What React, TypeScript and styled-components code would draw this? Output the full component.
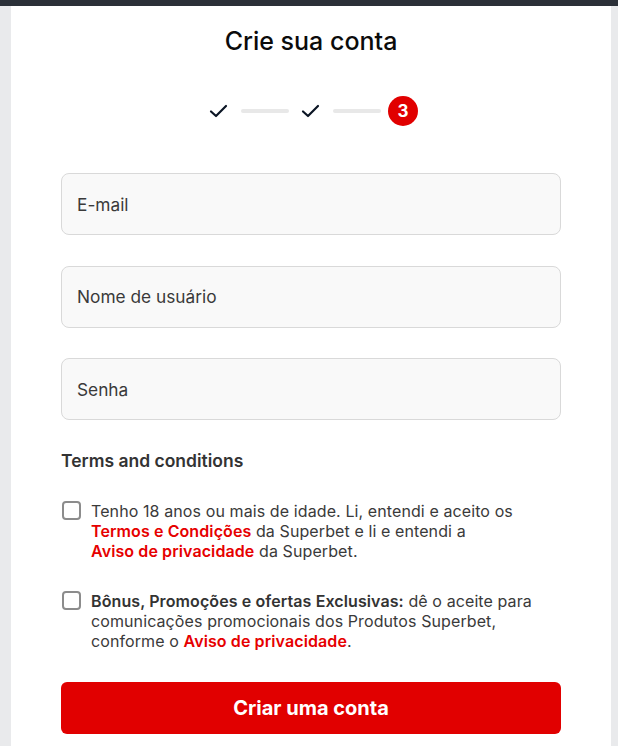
import React from "react";
import styled, { createGlobalStyle } from "styled-components";

const Global = createGlobalStyle`
  html, body { margin: 0; padding: 0; background: #e9eaec; }
  body { font-family: Inter, "Noto Sans", Arial, sans-serif; -webkit-font-smoothing: antialiased; }
  * { box-sizing: border-box; }
`;

const TopBar = styled.div`
  height: 6px;
  background: #2b3038;
`;

const Page = styled.div`
  display: flex;
  padding-left: 11px;
  height: 740px;
  overflow: hidden;
`;

const Panel = styled.main`
  width: 600px;
  background: #ffffff;
  padding: 20px 50px 0;
  display: flex;
  flex-direction: column;
`;

const Title = styled.h1`
  margin: 0;
  font-size: 25px;
  line-height: 30px;
  font-weight: 500;
  color: #0b0b0b;
  text-align: center;
`;

const Stepper = styled.div`
  margin-top: 40px;
  display: flex;
  align-items: center;
  justify-content: center;
  gap: 7px;
  height: 30px;
`;

const StepDone = styled.div`
  width: 30px;
  height: 30px;
  display: flex;
  align-items: center;
  justify-content: center;
`;

const StepLine = styled.div`
  width: 48px;
  height: 4px;
  border-radius: 2px;
  background: #e8e8e8;
`;

const StepCurrent = styled.div`
  width: 30px;
  height: 30px;
  border-radius: 50%;
  background: #e10000;
  color: #fff;
  font-weight: 700;
  font-size: 17px;
  display: flex;
  align-items: center;
  justify-content: center;
`;

const Fields = styled.div`
  margin-top: 47px;
  display: flex;
  flex-direction: column;
  gap: 30.5px;
`;

const Field = styled.div`
  height: 62px;
  border: 1px solid #d9d9d9;
  border-radius: 8px;
  background: #f9f9f9;
  display: flex;
  align-items: center;
  padding: 0 15px;
  font-size: 17.3px;
  color: #3a3a3a;
`;

const SectionTitle = styled.h2`
  margin: 29px 0 0;
  font-size: 17.5px;
  line-height: 24px;
  font-weight: 600;
  color: #333333;
`;

const CheckRow = styled.label<{ $top: number }>`
  margin-top: ${(p) => p.$top}px;
  display: flex;
  align-items: flex-start;
  gap: 10px;
  padding-left: 1px;
`;

const Box = styled.span`
  flex: none;
  width: 19px;
  height: 19px;
  border: 2px solid #8c8c8c;
  border-radius: 4px;
  background: #fff;
`;

const CheckText = styled.p`
  margin: 0;
  font-size: 16px;
  line-height: 20px;
  letter-spacing: 0.1px;
  color: #3a3a3a;
`;

const Link = styled.span`
  color: #e60000;
  font-weight: 600;
`;

const Strong = styled.span`
  font-weight: 600;
  color: #333;
`;

const Button = styled.button`
  margin-top: 31px;
  height: 52px;
  width: 100%;
  border: none;
  border-radius: 6px;
  background: #e10000;
  color: #fff;
  font-family: inherit;
  font-size: 20px;
  font-weight: 700;
  cursor: pointer;
`;

const Check = () => (
  <svg width="20" height="16" viewBox="0 0 20 16" fill="none">
    <path d="M2 8.5 L7 13 L17 3" stroke="#0b1524" strokeWidth="2.2" strokeLinecap="round" strokeLinejoin="round" />
  </svg>
);

export default function App() {
  return (
    <>
      <Global />
      <TopBar />
      <Page>
        <Panel>
          <Title>Crie sua conta</Title>
          <Stepper>
            <StepDone><Check /></StepDone>
            <StepLine />
            <StepDone><Check /></StepDone>
            <StepLine />
            <StepCurrent>3</StepCurrent>
          </Stepper>
          <Fields>
            <Field>E-mail</Field>
            <Field>Nome de usuário</Field>
            <Field>Senha</Field>
          </Fields>
          <SectionTitle>Terms and conditions</SectionTitle>
          <CheckRow $top={28}>
            <Box />
            <CheckText>
              Tenho 18 anos ou mais de idade. Li, entendi e aceito os <Link>Termos e Condições</Link> da Superbet e li e entendi a
              <br />
              <Link>Aviso de privacidade</Link> da Superbet.
            </CheckText>
          </CheckRow>
          <CheckRow $top={30}>
            <Box />
            <CheckText>
              <Strong>Bônus, Promoções e ofertas Exclusivas:</Strong> dê o aceite para comunicações promocionais dos Produtos Superbet, conforme o <Link>Aviso de privacidade</Link>.
            </CheckText>
          </CheckRow>
          <Button>Criar uma conta</Button>
        </Panel>
      </Page>
    </>
  );
}
